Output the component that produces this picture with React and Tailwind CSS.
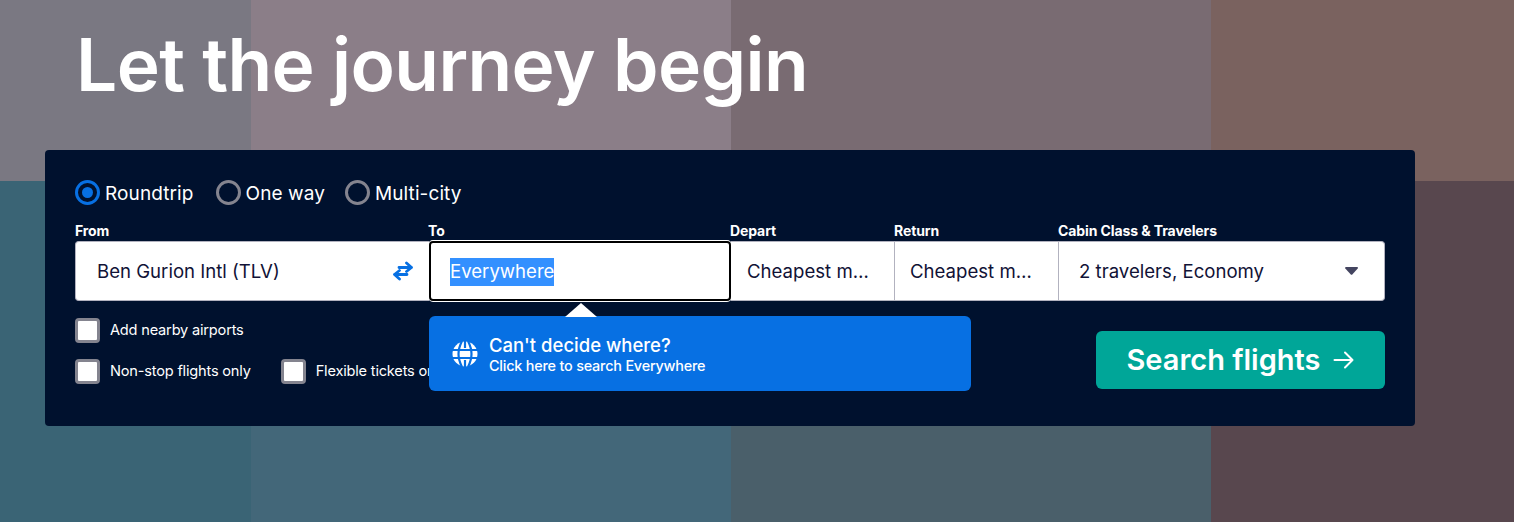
import React from "react";

function Radio({ label, active, className = "" }) {
  return (
    <label className={`flex items-center gap-[5px] text-[19px] leading-[24px] text-white ${className}`}>
      <span className={`flex h-[25px] w-[25px] items-center justify-center rounded-full border-[3px] ${active ? "border-[#0770e3]" : "border-[#84848f]"}`}>
        {active && <span className="h-[11px] w-[11px] rounded-full bg-[#0770e3]" />}
      </span>
      <span className="pt-[2px] tracking-[0.1px]">{label}</span>
    </label>
  );
}

function Check({ label }) {
  return (
    <label className="flex items-center gap-[10px] text-[14.6px] leading-[25px] tracking-[-0.2px] text-white whitespace-nowrap">
      <span className="h-[25px] w-[25px] rounded-[4px] border-[3px] border-[#84848f] bg-white" />
      <span className="pt-[1px]">{label}</span>
    </label>
  );
}

function Field({ label, width, children, className = "", labelClass = "-ml-[1px]" }) {
  return (
    <div className={`flex flex-col ${width}`}>
      <div className={`h-[22px] pt-[3px] text-[14px] font-bold leading-[18px] tracking-[-0.1px] text-white whitespace-nowrap ${labelClass}`}>{label}</div>
      <div className={`flex h-[60px] items-center bg-white pt-[2px] text-[18.6px] text-[#111236] border-y border-[#b2b2bf] ${className}`}>{children}</div>
    </div>
  );
}

function Globe() {
  return (
    <svg width="26" height="26" viewBox="0 0 26 26" fill="none">
      <circle cx="13" cy="13" r="12.500" fill="white" />
      <g stroke="#0770e3" strokeWidth="2.200">
        <path d="M0 9h26M0 17h26" />
        <path d="M13 0v7M13 19v7" />
        <path d="M10 0C7 6 6.500 10 6.500 13s.5 7 3.500 13" />
        <path d="M16 0c3 6 3.500 10 3.500 13s-.5 7-3.500 13" />
      </g>
    </svg>
  );
}

export default function App() {
  return (
    <div className="relative h-[522px] w-[1514px] overflow-hidden" style={{ fontFamily: "Inter, 'Noto Sans', sans-serif" }}>
      <div className="absolute inset-0 grid grid-cols-[251px_480px_480px_303px] grid-rows-[181px_341px]">
        <div className="bg-[#7a7882]" />
        <div className="bg-[#8b7e88]" />
        <div className="bg-[#796b72]" />
        <div className="bg-[#7a625f]" />
        <div className="bg-[#3a6475]" />
        <div className="bg-[#436779]" />
        <div className="bg-[#4a5f6a]" />
        <div className="bg-[#58474e]" />
      </div>

      <div className="relative pl-[45px]">
        <h1 className="h-[150px] pl-[31px] pt-[23px] text-[73px] font-semibold leading-[84px] tracking-[-0.6px] text-white">Let the journey begin</h1>

        <div className="relative h-[276px] w-[1370px] rounded-[4px] bg-[#00112e] px-[30px] pt-[30px]">
          <div className="flex h-[25px] items-center gap-[22px]">
            <Radio label="Roundtrip" active />
            <Radio label="One way" className="-mr-[2px]" />
            <Radio label="Multi-city" />
          </div>

          <div className="mt-[14px] flex">
            <Field label="From" width="w-[354px]" labelClass="" className="rounded-l-[4px] border-l pl-[21px] pr-[16px] justify-between">
              <span>Ben Gurion Intl (TLV)</span>
              <svg width="20" height="20" viewBox="0 0 20 20" fill="none" stroke="#0770e3" strokeWidth="2.800" strokeLinecap="round" strokeLinejoin="round" className="-mt-[2px]">
                <path d="M6 6.500h12.500M13.500 2l5 4.500-5 4" />
                <path d="M14 13.500H1.500M6.500 9.500l-5 4 5 4.500" />
              </svg>
            </Field>
            <Field label="To" width="w-[302px]" className="relative rounded-[4px] !border-0 pl-[21px] outline-2 outline-black -outline-offset-2 ring-1 ring-white">
              <span className="bg-[#3390ff] text-white">Everywhere</span>
            </Field>
            <Field label="Depart" width="w-[164px]" className="border-r border-r-[#b2b2bf] pl-[16px] pr-[22px]">
              <span className="truncate">Cheapest month</span>
            </Field>
            <Field label="Return" width="w-[164px]" className="border-r border-r-[#b2b2bf] pl-[15px] pr-[23px]">
              <span className="truncate">Cheapest month</span>
            </Field>
            <Field label="Cabin Class & Travelers" width="w-[326px]" className="rounded-r-[4px] border-r pl-[20px] pr-[26px] justify-between">
              <span>2 travelers, Economy</span>
              <svg width="13" height="8" viewBox="0 0 13 8" fill="#444560" className="-mt-[2px]"><path d="M1 0h11c.8 0 1.200.9.700 1.500L7.300 7.500c-.4.400-1.100.4-1.500 0L.3 1.500C-.2.900.2 0 1 0z" /></svg>
            </Field>
          </div>

          <div className="mt-[16px] flex items-start justify-between">
            <div className="flex flex-col gap-[15px]">
              <Check label="Add nearby airports" />
              <div className="flex gap-[30px]">
                <Check label="Non-stop flights only" />
                <Check label="Flexible tickets only" />
              </div>
            </div>
            <button className="mt-[14px] flex h-[58px] w-[289px] items-center justify-center gap-[12px] rounded-[6px] bg-[#00a698] text-[29px] font-semibold text-white">
              Search flights
              <svg width="22" height="20" viewBox="0 0 22 20" fill="none" stroke="white" strokeWidth="2" strokeLinecap="round" strokeLinejoin="round">
                <path d="M1.500 10h18M12 2.500l7.500 7.500-7.500 7.500" />
              </svg>
            </button>
          </div>

          <div className="absolute left-[384px] top-[166px] flex h-[75px] w-[542px] items-center gap-[11px] rounded-[6px] bg-[#0770e3] pl-[23px] text-white">
            <div className="absolute left-[136px] top-[-13px] h-0 w-0 border-x-[16px] border-b-[14px] border-x-transparent border-b-white" />
            <Globe />
            <div className="flex flex-col">
              <span className="text-[18.5px] font-medium leading-[24px]">Can't decide where?</span>
              <span className="text-[14.4px] font-medium leading-[18px] tracking-[-0.2px]">Click here to search Everywhere</span>
            </div>
          </div>
        </div>
      </div>
    </div>
  );
}
